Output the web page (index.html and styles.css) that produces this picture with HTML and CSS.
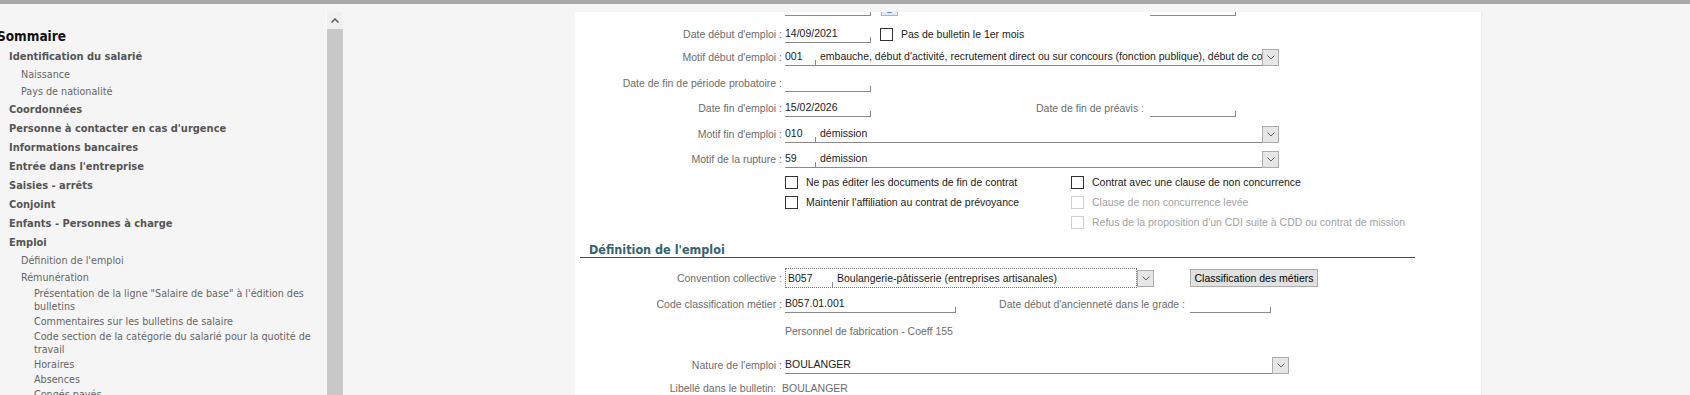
FILE: index.html
```html
<!DOCTYPE html>
<html lang="fr">
<head>
    <meta charset="UTF-8">
    <meta name="viewport" content="width=device-width, initial-scale=1.0">
    <title>Fiche salarié - Emploi</title>
    <link rel="stylesheet" href="styles.css">
</head>
<body>
    <div class="topbar"></div>
    <div class="main">
        <!-- Sommaire (navigation) -->
        <div class="sommaire">
            <div class="som-title">Sommaire</div>
            <div class="n1">Identification du salarié</div>
            <div class="n2">Naissance</div>
            <div class="n2">Pays de nationalité</div>
            <div class="n1">Coordonnées</div>
            <div class="n1">Personne à contacter en cas d'urgence</div>
            <div class="n1">Informations bancaires</div>
            <div class="n1">Entrée dans l'entreprise</div>
            <div class="n1">Saisies - arrêts</div>
            <div class="n1">Conjoint</div>
            <div class="n1">Enfants - Personnes à charge</div>
            <div class="n1">Emploi</div>
            <div class="n2">Définition de l'emploi</div>
            <div class="n2">Rémunération</div>
            <div class="n3">Présentation de la ligne "Salaire de base" à l'édition des bulletins</div>
            <div class="n3">Commentaires sur les bulletins de salaire</div>
            <div class="n3">Code section de la catégorie du salarié pour la quotité de travail</div>
            <div class="n3">Horaires</div>
            <div class="n3">Absences</div>
            <div class="n3">Congés payés</div>
        </div>
        <div class="vscroll">
            <div class="vscroll-up">
                <svg width="8" height="5" viewBox="0 0 8 5"><path d="M0.5 4.5 L4 1 L7.5 4.5" fill="none" stroke="#5a5a5a" stroke-width="1.5"/></svg>
            </div>
            <div class="vscroll-thumb"></div>
        </div>

        <!-- Fiche -->
        <div class="panel">
            <div class="row r-top">
                <span class="lbl"></span>
                <span class="fld w-date"></span>
                <span class="cal-btn"><i></i></span>
                <span class="lbl2 w-l0"></span>
                <span class="fld w-date"></span>
            </div>
            <div class="row r-debut">
                <span class="lbl">Date début d'emploi :</span>
                <span class="fld w-date">14/09/2021</span>
                <label class="chk bull"><span class="box"></span>Pas de bulletin le 1er mois</label>
            </div>
            <div class="row r-motif">
                <span class="lbl">Motif début d'emploi :</span>
                <div class="combo">
                    <span class="fld code">001</span>
                    <span class="fld desc">embauche, début d'activité, recrutement direct ou sur concours (fonction publique), début de contrat</span>
                    <span class="ddb"><svg width="8" height="5" viewBox="0 0 8 5"><path d="M0.5 0.5 L4 4 L7.5 0.5" fill="none" stroke="#606060"/></svg></span>
                </div>
            </div>
            <div class="row r-prob">
                <span class="lbl">Date de fin de période probatoire :</span>
                <span class="fld w-date"></span>
            </div>
            <div class="row r-fin">
                <span class="lbl">Date fin d'emploi :</span>
                <span class="fld w-date">15/02/2026</span>
                <span class="lbl2 w-l1">Date de fin de préavis :</span>
                <span class="fld w-date"></span>
            </div>
            <div class="row r-motif-fin">
                <span class="lbl">Motif fin d'emploi :</span>
                <div class="combo">
                    <span class="fld code">010</span>
                    <span class="fld desc">démission</span>
                    <span class="ddb"><svg width="8" height="5" viewBox="0 0 8 5"><path d="M0.5 0.5 L4 4 L7.5 0.5" fill="none" stroke="#606060"/></svg></span>
                </div>
            </div>
            <div class="row r-rupture">
                <span class="lbl">Motif de la rupture :</span>
                <div class="combo">
                    <span class="fld code">59</span>
                    <span class="fld desc">démission</span>
                    <span class="ddb"><svg width="8" height="5" viewBox="0 0 8 5"><path d="M0.5 0.5 L4 4 L7.5 0.5" fill="none" stroke="#606060"/></svg></span>
                </div>
            </div>

            <div class="checks">
                <div class="chk-col">
                    <label class="chk"><span class="box"></span>Ne pas éditer les documents de fin de contrat</label>
                    <label class="chk"><span class="box"></span>Maintenir l'affiliation au contrat de prévoyance</label>
                </div>
                <div class="chk-col">
                    <label class="chk"><span class="box"></span>Contrat avec une clause de non concurrence</label>
                    <label class="chk off"><span class="box"></span>Clause de non concurrence levée</label>
                    <label class="chk off"><span class="box"></span>Refus de la proposition d'un CDI suite à CDD ou contrat de mission</label>
                </div>
            </div>

            <div class="sec">Définition de l'emploi</div>

            <div class="row r-conv">
                <span class="lbl">Convention collective :</span>
                <div class="combo">
                    <div class="focus">
                        <span class="fld code">B057</span>
                        <span class="desc">Boulangerie-pâtisserie (entreprises artisanales)</span>
                    </div>
                    <span class="ddb"><svg width="8" height="5" viewBox="0 0 8 5"><path d="M0.5 0.5 L4 4 L7.5 0.5" fill="none" stroke="#606060"/></svg></span>
                </div>
                <button class="btn">Classification des métiers</button>
            </div>
            <div class="row r-code">
                <span class="lbl">Code classification métier :</span>
                <span class="fld w-cc">B057.01.001</span>
                <span class="lbl2 w-l2">Date début d'ancienneté dans le grade :</span>
                <span class="fld w-anc"></span>
            </div>
            <div class="row r-pers">
                <span class="lbl"></span>
                <span class="note">Personnel de fabrication - Coeff 155</span>
            </div>
            <div class="row r-nature">
                <span class="lbl">Nature de l'emploi :</span>
                <div class="combo">
                    <span class="fld wide">BOULANGER</span>
                    <span class="ddb"><svg width="8" height="5" viewBox="0 0 8 5"><path d="M0.5 0.5 L4 4 L7.5 0.5" fill="none" stroke="#606060"/></svg></span>
                </div>
            </div>
            <div class="row r-libelle">
                <span class="lbl tight">Libellé dans le bulletin:</span>
                <span class="note">BOULANGER</span>
            </div>
        </div>
    </div>
</body>
</html>
```

FILE: styles.css
```css
body {
    margin: 0;
    height: 395px;
    overflow: hidden;
    background-color: #f5f5f5;
    font-family: "Liberation Sans", Arial, sans-serif;
    font-size: 10.5px;
}
.topbar {
    height: 4px;
    background-color: #a9a9a9;
}
.main {
    display: flex;
    height: 391px;
}

/* Sommaire */
.sommaire {
    width: 321px;
    padding: 21px 5px 0 0;
    overflow: hidden;
    flex: none;
    font-family: "DejaVu Sans Condensed", "DejaVu Sans", sans-serif;
    font-stretch: condensed;
    font-size: 11px;
    color: #555;
}
.som-title {
    margin-left: -3px;
    line-height: 22px;
    font-size: 13.5px;
    font-weight: bold;
    color: #111;
}
.n1 {
    padding-left: 9px;
    line-height: 19px;
    font-weight: bold;
    white-space: nowrap;
}
.n2 {
    padding-left: 21px;
    line-height: 17px;
    font-size: 10.7px;
    color: #666;
}
.n3 {
    padding: 1px 0 1px 34px;
    line-height: 13px;
    font-size: 10.7px;
    color: #666;
}
.vscroll {
    width: 16px;
    margin-top: 8px;
    border-left: 1px solid #fbfbfb;
    display: flex;
    flex-direction: column;
    flex: none;
}
.vscroll-up {
    height: 17px;
    display: flex;
    align-items: center;
    justify-content: center;
    background-color: #f0f0f0;
}
.vscroll-thumb {
    flex: 1;
    background-color: #c8c8c8;
}

/* Fiche */
.panel {
    width: 906px;
    margin: 8px 0 0 232px;
    background-color: #fff;
    border-right: 1px solid #e9e9e9;
    overflow: hidden;
    flex: none;
}
.row {
    display: flex;
    align-items: center;
    height: 18px;
    margin-top: 8px;
}
.lbl {
    width: 207px;
    margin-right: 3px;
    text-align: right;
    color: #6d6d6d;
    white-space: nowrap;
    flex: none;
}
.lbl.tight {
    width: 201px;
    margin-right: 6px;
}
.lbl2 {
    text-align: right;
    color: #6d6d6d;
    white-space: nowrap;
    flex: none;
}
.w-l0 { width: 246px; margin-right: 6px; }
.w-l1 { width: 273px; margin-right: 6px; }
.w-l2 { width: 229px; margin-right: 5px; }

.fld {
    height: 17px;
    line-height: 17px;
    border-bottom: 1px solid #8a8a8a;
    background: linear-gradient(#8a8a8a, #8a8a8a) right bottom / 1px 5px no-repeat;
    color: #1c1c1c;
    white-space: nowrap;
    overflow: hidden;
    flex: none;
}
.w-date { width: 86px; }
.w-cc { width: 171px; }
.w-anc { width: 81px; }

.combo {
    display: flex;
    align-items: center;
}
.combo .code { width: 31px; }
.combo .desc {
    width: 442px;
    padding-left: 4px;
    background: none;
}
.combo .wide {
    width: 487px;
    background: none;
}
.ddb {
    width: 15px;
    height: 15px;
    border: 1px solid #acacac;
    background-color: #e6e6e6;
    display: flex;
    align-items: center;
    justify-content: center;
    flex: none;
}

.r-top { margin-top: -14px; align-items: flex-end; }
.r-debut { margin-top: 9px; }
.r-motif { margin-top: 5px; }
.r-fin { margin-top: 7px; }
.r-rupture { margin-top: 7px; }

.cal-btn {
    width: 15px;
    height: 15px;
    margin-left: 10px;
    border: 1px solid #a9b7c9;
    background-color: #e4eaf2;
    display: flex;
    align-items: center;
    justify-content: center;
    flex: none;
}
.cal-btn i {
    width: 11px;
    height: 11px;
    border-radius: 50%;
    background-color: #3d6fc0;
}

.chk {
    display: flex;
    align-items: center;
    gap: 8px;
    height: 20px;
    color: #1c1c1c;
    white-space: nowrap;
}
.chk .box {
    width: 11px;
    height: 11px;
    border: 1px solid #333;
    background-color: #fff;
    flex: none;
}
.chk.off { color: #a3a3a3; }
.chk.off .box { border-color: #cfcfcf; }
.bull { margin-left: 9px; }

.checks {
    display: flex;
    height: 40px;
    margin-top: 4px;
    padding-left: 210px;
}
.chk-col:first-child { width: 286px; }

.sec {
    width: 826px;
    margin: 31px 0 0 5px;
    padding: 0 0 1px 9px;
    line-height: 13px;
    border-bottom: 1px solid #2f5562;
    font-family: "DejaVu Sans Condensed", "DejaVu Sans", sans-serif;
    font-stretch: condensed;
    font-size: 12.5px;
    font-weight: bold;
    color: #35626f;
}

.r-conv { height: 20px; margin-top: 10px; }
.focus {
    display: flex;
    width: 350px;
    height: 18px;
    border: 1px dotted #707070;
}
.focus .code {
    width: 45px;
    height: 18px;
    line-height: 18px;
    padding-left: 2px;
    border-bottom: none;
}
.focus .desc {
    padding-left: 4px;
    line-height: 18px;
    color: #1c1c1c;
    white-space: nowrap;
}
.btn {
    box-sizing: border-box;
    width: 128px;
    height: 18px;
    margin-left: 36px;
    padding: 0;
    border: 1px solid #adadad;
    background-color: #e1e1e1;
    font: inherit;
    color: #000;
}
.r-code { margin-top: 7px; }
.r-pers { margin-top: 9px; }
.note { color: #6d6d6d; }
.r-nature { margin-top: 16px; }
.r-libelle { margin-top: 5px; }
```
